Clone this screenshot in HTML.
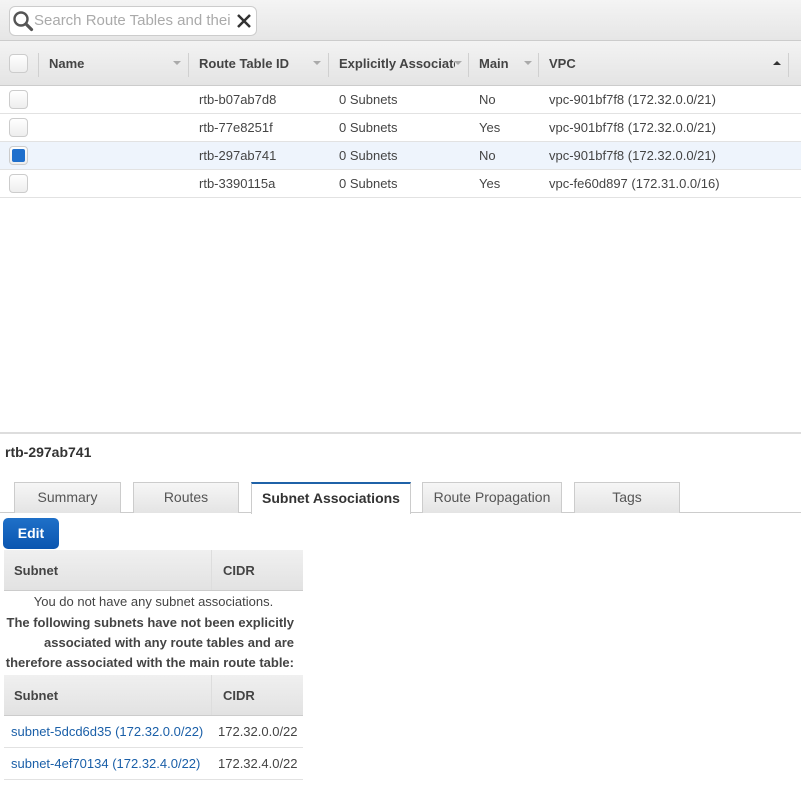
<!DOCTYPE html>
<html><head><style>
*{margin:0;padding:0;box-sizing:border-box}
body{width:801px;height:798px;background:#fff;font-family:"Liberation Sans",sans-serif;font-size:13px;color:#444;position:relative;overflow:hidden}
.a{position:absolute}
.top{left:0;top:0;width:801px;height:41px;background:linear-gradient(#f4f4f4,#e6e6e6);border-bottom:1px solid #ccc}
.search{left:9px;top:6px;width:248px;height:30px;background:#fff;border:1px solid #ccc;border-radius:6px}
.hdr{left:0;top:41px;width:801px;height:45px;background:linear-gradient(#f3f3f3,#e4e4e4);border-bottom:1px solid #ccc}
.hdr b{position:absolute;top:15px;font-size:13px;color:#444}
.div{position:absolute;top:12px;width:1px;height:24px;background:#d0d0d0}
.arr{position:absolute;top:20px;width:0;height:0;border-left:4px solid transparent;border-right:4px solid transparent;border-top:4px solid #aaa}
.row{left:0;width:801px;height:28px;border-bottom:1px solid #e2e2e2}
.row span{position:absolute;top:6px}
.cb{position:absolute;left:9px;top:4px;width:19px;height:19px;border:1px solid #ccc;border-radius:4px;background:linear-gradient(#fff,#eee)}
.tab{top:482px;height:31px;border:1px solid #ccc;border-bottom:none;background:linear-gradient(#f6f6f6,#e4e4e4);text-align:center;line-height:29px;font-size:14px;color:#555}
.th{left:4px;width:299px;height:41px;background:linear-gradient(#f0f0f0,#e2e2e2);border-bottom:1px solid #ccc;font-weight:bold}
.th span{position:absolute;top:13px}
.tr{left:4px;width:299px;height:32px;border-bottom:1px solid #e2e2e2}
.tr span{position:absolute;top:8px}
a{color:#1a5fa8;text-decoration:none}
</style></head><body>
<div class="a top"></div>
<div class="a search">
<svg class="a" style="left:2px;top:3px" width="22" height="22" viewBox="0 0 22 22"><circle cx="9" cy="9" r="6.5" fill="none" stroke="#555" stroke-width="2.4"/><path d="M14 14L19.5 19.5" stroke="#555" stroke-width="3.2" stroke-linecap="round"/></svg>
<span class="a" style="left:24px;top:5px;font-size:15px;color:#aaa">Search Route Tables and thei</span>
<svg class="a" style="left:226px;top:6px" width="16" height="16" viewBox="0 0 16 16"><path d="M2 2L14 14M14 2L2 14" stroke="#333" stroke-width="2.5"/></svg>
</div>
<div class="a hdr">
<div class="cb" style="top:13px;left:9px"></div>
<div class="div" style="left:38px"></div>
<b style="left:49px">Name</b><div class="arr" style="left:173px"></div>
<div class="div" style="left:188px"></div>
<b style="left:199px">Route Table ID</b><div class="arr" style="left:313px"></div>
<div class="div" style="left:328px"></div>
<b style="left:339px;width:116px;overflow:hidden;white-space:nowrap">Explicitly Associated</b><div class="arr" style="left:454px"></div>
<div class="div" style="left:468px"></div>
<b style="left:479px">Main</b><div class="arr" style="left:524px"></div>
<div class="div" style="left:538px"></div>
<b style="left:549px">VPC</b>
<div class="a" style="left:773px;top:20px;border-left:4px solid transparent;border-right:4px solid transparent;border-bottom:4px solid #333"></div>
<div class="div" style="left:788px"></div>
</div>
<div class="a row" style="top:86px"><div class="cb"></div><span style="left:199px">rtb-b07ab7d8</span><span style="left:339px">0 Subnets</span><span style="left:479px">No</span><span style="left:549px">vpc-901bf7f8 (172.32.0.0/21)</span></div>
<div class="a row" style="top:114px"><div class="cb"></div><span style="left:199px">rtb-77e8251f</span><span style="left:339px">0 Subnets</span><span style="left:479px">Yes</span><span style="left:549px">vpc-901bf7f8 (172.32.0.0/21)</span></div>
<div class="a row" style="top:142px;background:#eef4fc"><div class="cb"><div class="a" style="left:2px;top:2px;width:13px;height:13px;border-radius:2px;background:#1f6fcc"></div></div><span style="left:199px">rtb-297ab741</span><span style="left:339px">0 Subnets</span><span style="left:479px">No</span><span style="left:549px">vpc-901bf7f8 (172.32.0.0/21)</span></div>
<div class="a row" style="top:170px"><div class="cb"></div><span style="left:199px">rtb-3390115a</span><span style="left:339px">0 Subnets</span><span style="left:479px">Yes</span><span style="left:549px">vpc-fe60d897 (172.31.0.0/16)</span></div>

<div class="a" style="left:0;top:432px;width:801px;height:2px;background:#ddd"></div>
<div class="a" style="left:5px;top:444px;font-weight:bold;font-size:14px;color:#333">rtb-297ab741</div>
<div class="a" style="left:0;top:512px;width:801px;height:1px;background:#ccc"></div>
<div class="a tab" style="left:14px;width:107px">Summary</div>
<div class="a tab" style="left:133px;width:106px">Routes</div>
<div class="a tab" style="left:251px;width:160px;background:#fff;border-top:2px solid #1f62a8;height:32px;font-weight:bold;color:#333">Subnet Associations</div>
<div class="a tab" style="left:422px;width:140px">Route Propagation</div>
<div class="a tab" style="left:574px;width:106px">Tags</div>
<div class="a" style="left:3px;top:518px;width:56px;height:31px;border-radius:5px;background:linear-gradient(#1f70c8,#0a55b0);color:#fff;font-weight:bold;font-size:14px;text-align:center;line-height:31px">Edit</div>
<div class="a th" style="top:550px"><span style="left:10px">Subnet</span><div class="a" style="left:207px;top:0;width:1px;height:40px;background:#ddd"></div><span style="left:219px">CIDR</span></div>
<div class="a" style="left:4px;top:594px;width:299px;text-align:center">You do not have any subnet associations.</div>
<div class="a" style="left:4px;top:613px;width:290px;text-align:right;font-weight:bold;line-height:20px;color:#444">The following subnets have not been explicitly associated with any route tables and are therefore associated with the main route table:</div>
<div class="a th" style="top:675px"><span style="left:10px">Subnet</span><div class="a" style="left:207px;top:0;width:1px;height:40px;background:#ddd"></div><span style="left:219px">CIDR</span></div>
<div class="a tr" style="top:716px"><span style="left:7px"><a>subnet-5dcd6d35 (172.32.0.0/22)</a></span><span style="left:214px">172.32.0.0/22</span></div>
<div class="a tr" style="top:748px"><span style="left:7px"><a>subnet-4ef70134 (172.32.4.0/22)</a></span><span style="left:214px">172.32.4.0/22</span></div>
</body></html>
